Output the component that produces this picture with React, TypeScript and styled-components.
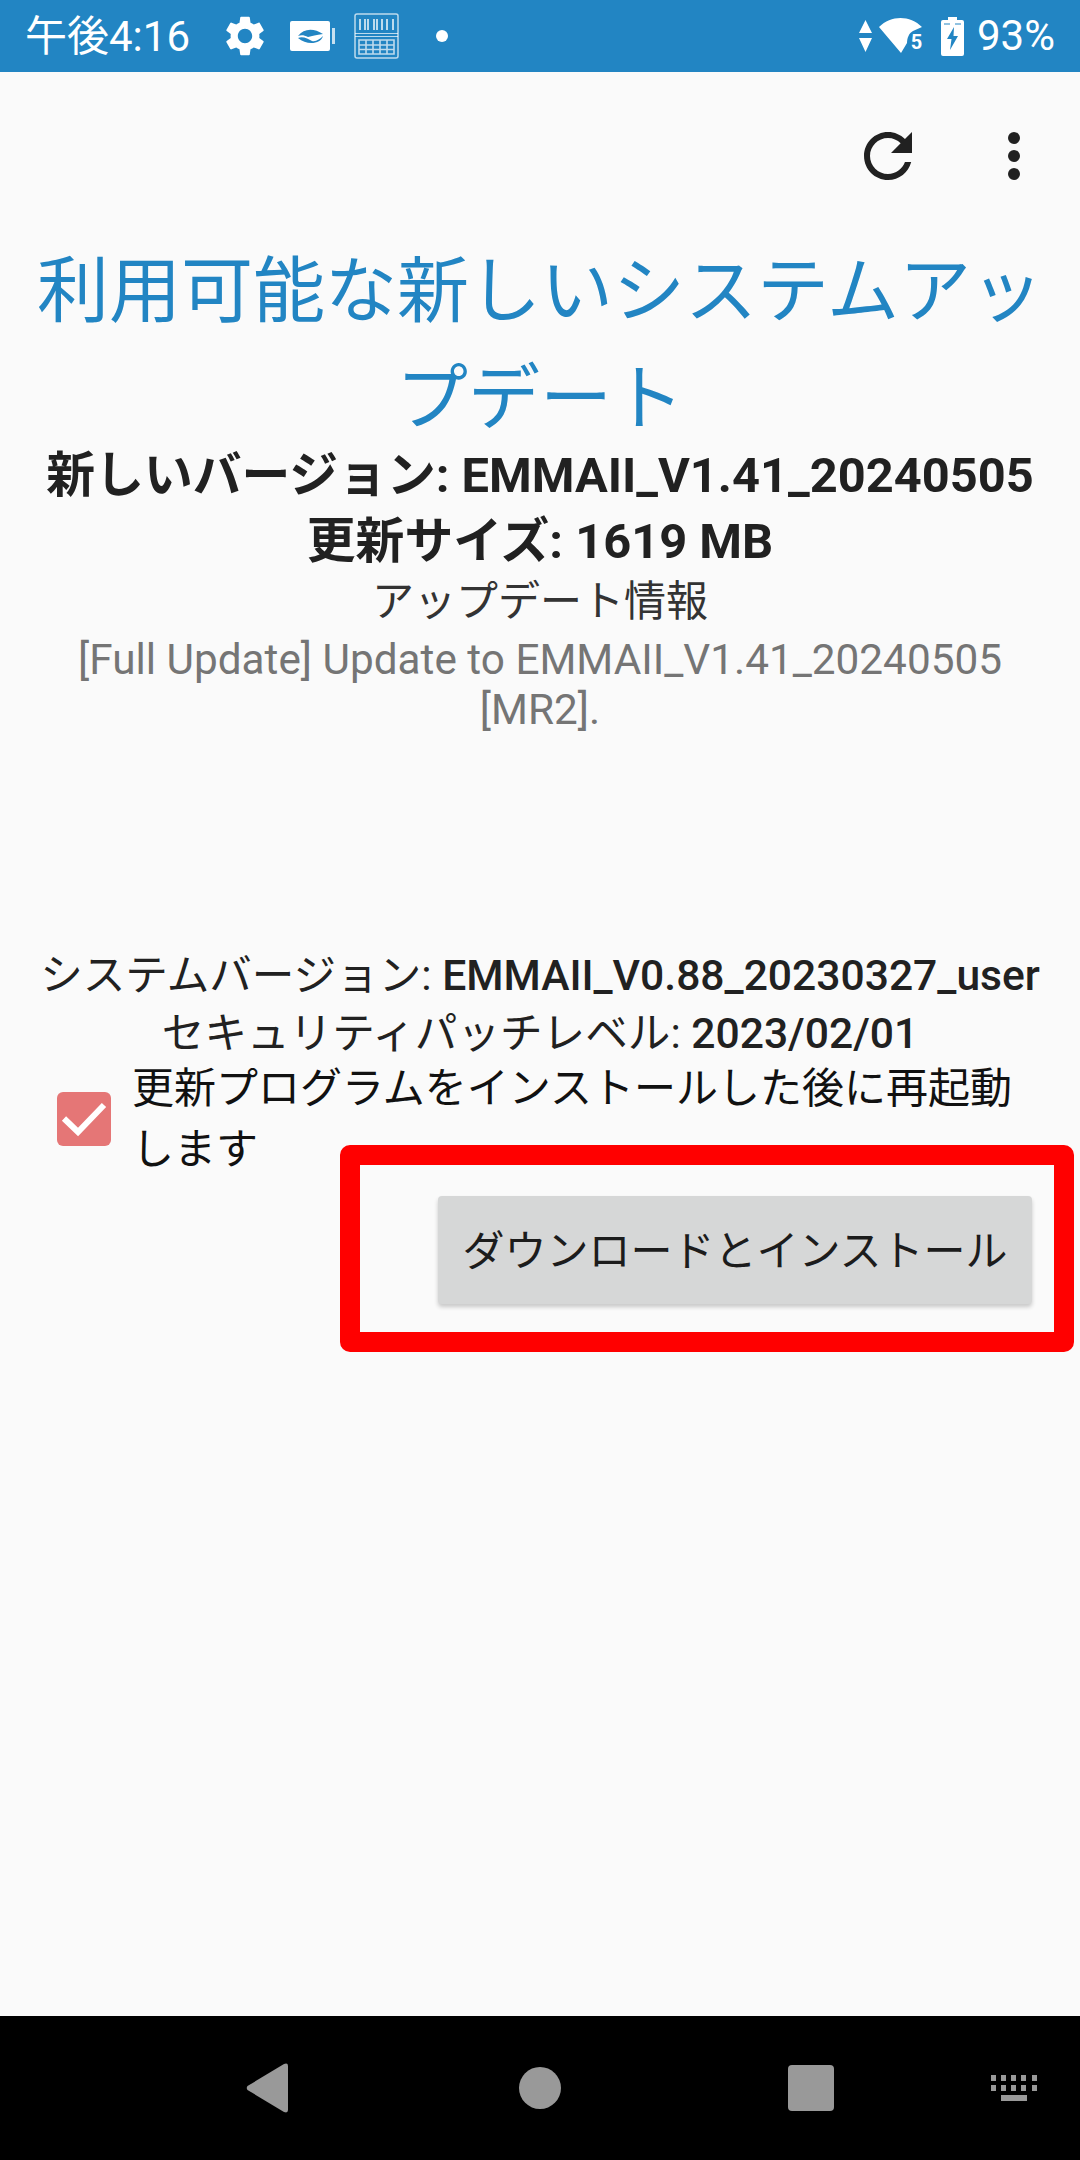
import React, { FC } from "react";
import styled, { createGlobalStyle } from "styled-components";

const FONT = `Roboto, "Noto Sans CJK JP", sans-serif`;
const BLUE = "#2285c3";

const GlobalStyle = createGlobalStyle`
  html, body {
    margin: 0;
    padding: 0;
    background: #fafafa;
  }
  body {
    font-family: ${FONT};
  }
`;

const App: FC = () => {
  return (
    <Screen>
      <GlobalStyle />
      <StatusBar>
        <Clock>午後4:16</Clock>
        <StatusGroup>
          <GearIcon />
          <LeafBatteryIcon />
          <BarcodeIcon />
          <Dot />
        </StatusGroup>
        <StatusRight>
          <ArrowsIcon />
          <WifiIcon />
          <BatteryIcon />
          <Percent>93%</Percent>
        </StatusRight>
      </StatusBar>

      <Content>
        <Toolbar>
          <svg width="72" height="72" viewBox="0 0 24 24" fill="#212121">
            <path d="M17.65 6.35C16.2 4.9 14.21 4 12 4c-4.42 0-7.99 3.58-7.99 8s3.57 8 7.99 8c3.73 0 6.84-2.55 7.73-6h-2.08c-.82 2.33-3.04 4-5.65 4-3.31 0-6-2.69-6-6s2.69-6 6-6c1.66 0 3.14.69 4.22 1.78L13 11h7V4l-2.35 2.35z" />
          </svg>
          <svg width="72" height="72" viewBox="0 0 24 24" fill="#212121">
            <circle cx="12" cy="6" r="2" />
            <circle cx="12" cy="12" r="2" />
            <circle cx="12" cy="18" r="2" />
          </svg>
        </Toolbar>

        <Title>利用可能な新しいシステムアップデート</Title>
        <VersionBlock>
          <VersionLine>新しいバージョン: EMMAII_V1.41_20240505</VersionLine>
          <VersionLine>更新サイズ: 1619 MB</VersionLine>
        </VersionBlock>
        <InfoHeading>アップデート情報</InfoHeading>
        <InfoBody>[Full Update] Update to EMMAII_V1.41_20240505 [MR2].</InfoBody>

        <SystemInfo>
          <SystemLine>
            システムバージョン: <b>EMMAII_V0.88_20230327_user</b>
          </SystemLine>
          <SystemLine>
            セキュリティパッチレベル: <b>2023/02/01</b>
          </SystemLine>
        </SystemInfo>

        <CheckRow>
          <CheckBox>
            <svg width="54" height="54" viewBox="0 0 54 54" fill="none">
              <path d="M7 26.5 L21 40 L47 13" stroke="#fff" strokeWidth="6" />
            </svg>
          </CheckBox>
          <CheckLabel>更新プログラムをインストールした後に再起動します</CheckLabel>
        </CheckRow>

        <ButtonRow>
          <RedFrame />
          <InstallButton>ダウンロードとインストール</InstallButton>
        </ButtonRow>
      </Content>

      <NavBar>
        <svg width="42" height="50" viewBox="0 0 42 50" fill="#999">
          <path d="M38 1 L1.5 23 Q0 25 1.5 27 L38 49 Q42 50.5 42 47 V3 Q42 -0.5 38 1 Z" />
        </svg>
        <NavCircle />
        <NavSquare />
        <NavKeyboard>
          <svg width="46" height="26" viewBox="0 0 46 26" fill="#999">
            <rect x="0" y="0" width="5" height="6" />
            <rect x="10" y="0" width="5" height="6" />
            <rect x="20" y="0" width="5" height="6" />
            <rect x="30" y="0" width="5" height="6" />
            <rect x="41" y="0" width="5" height="6" />
            <rect x="0" y="10" width="5" height="6" />
            <rect x="10" y="10" width="5" height="6" />
            <rect x="20" y="10" width="5" height="6" />
            <rect x="30" y="10" width="5" height="6" />
            <rect x="41" y="10" width="5" height="6" />
            <rect x="10" y="20" width="26" height="6" />
          </svg>
        </NavKeyboard>
      </NavBar>
    </Screen>
  );
};

const GearIcon: FC = () => (
  <svg width="48" height="48" viewBox="0 0 24 24" fill="#fff">
    <path d="M19.14 12.94c.04-.3.06-.61.06-.94 0-.32-.02-.64-.07-.94l2.03-1.58c.18-.14.23-.41.12-.61l-1.92-3.32c-.12-.22-.37-.29-.59-.22l-2.39.96c-.5-.38-1.03-.7-1.62-.94l-.36-2.54c-.04-.24-.24-.41-.48-.41h-3.84c-.24 0-.43.17-.47.41l-.36 2.54c-.59.24-1.13.57-1.62.94l-2.39-.96c-.22-.08-.47 0-.59.22L2.74 8.87c-.12.21-.08.47.12.61l2.03 1.58c-.05.3-.09.63-.09.94s.02.64.07.94l-2.03 1.58c-.18.14-.23.41-.12.61l1.92 3.32c.12.22.37.29.59.22l2.39-.96c.5.38 1.03.7 1.62.94l.36 2.54c.05.24.24.41.48.41h3.84c.24 0 .44-.17.47-.41l.36-2.54c.59-.24 1.13-.56 1.62-.94l2.39.96c.22.08.47 0 .59-.22l1.92-3.32c.12-.22.07-.47-.12-.61l-2.01-1.58zM12 15.6c-1.98 0-3.6-1.62-3.6-3.6s1.62-3.6 3.6-3.6 3.6 1.62 3.6 3.6-1.62 3.6-3.6 3.6z" />
  </svg>
);

const LeafBatteryIcon: FC = () => (
  <svg width="45" height="30" viewBox="0 0 45 30">
    <rect x="0" y="0" width="40" height="30" rx="2" fill="#fff" />
    <rect x="42" y="7" width="3" height="16" fill="#fff" fillOpacity="0.75" />
    <path d="M8 15 C14 7 24 7 33 13 C26 14 22 15 18 16 C14 14 11 14 8 15 Z" fill={BLUE} />
    <path d="M8 17 C13 15 18 18 22 20 C26 21 30 18 33 15 C31 23 17 25 8 17 Z" fill={BLUE} />
  </svg>
);

const BarcodeIcon: FC = () => (
  <svg width="45" height="46" viewBox="0 0 45 46" fill="none" stroke="#fff" strokeOpacity="0.7">
    <rect x="1" y="1" width="43" height="44" rx="2" strokeWidth="1.5" />
    <path d="M1 20.5 H44 M1 23.5 H44" strokeWidth="1.2" />
    <path
      d="M6 6 V17 M11 6 V17 M14 6 V17 M20 6 V17 M23 6 V17 M28 6 V17 M33 6 V17 M39 6 V17"
      strokeWidth="2"
    />
    <path
      d="M5 27 H40 V41 H5 Z M5 32 H40 M5 36.5 H40 M12 27 V41 M19 27 V41 M26 27 V41 M33 27 V41"
      strokeWidth="1.6"
    />
  </svg>
);

const ArrowsIcon: FC = () => (
  <svg width="13" height="32" viewBox="0 0 13 32" fill="#fff">
    <path d="M6.5 0 L13 13 H0 Z M0 18 H13 L6.5 32 Z" />
  </svg>
);

const WifiIcon: FC = () => (
  <svg width="44" height="36" viewBox="0 0 44 36" fill="#fff">
    <path d="M0 9 C12 -3 31 -3 43 9 L34 13 C30 15 28 20 28 25 L22 35 Z" />
    <text x="37.5" y="31" fontSize="20" fontWeight="700" fontFamily="Roboto, sans-serif" textAnchor="middle">
      5
    </text>
  </svg>
);

const BatteryIcon: FC = () => (
  <svg width="23" height="39" viewBox="0 0 23 39" fill="#fff">
    <path d="M7 0 H16 V3 H21 Q23 3 23 5 V37 Q23 39 21 39 H2 Q0 39 0 37 V5 Q0 3 2 3 H7 Z" />
    <path d="M13 10 L6 22 H10.5 L9 33 L17 19 H12.5 Z" fill={BLUE} />
    <path d="M3 7 H9 M14 7 H20" stroke={BLUE} strokeWidth="1" />
  </svg>
);

export default App;

const Screen = styled.div`
  width: 1080px;
  height: 2160px;
  display: flex;
  flex-direction: column;
  background: #fafafa;
  overflow: hidden;
`;

const StatusBar = styled.div`
  height: 72px;
  flex: none;
  display: flex;
  align-items: center;
  padding: 0 25px 0 25px;
  background: ${BLUE};
  color: #fff;
  box-sizing: border-box;
`;

const Clock = styled.span`
  padding-top: 2px;
  font-size: 42px;
  line-height: 72px;
  white-space: nowrap;
`;

const StatusGroup = styled.div`
  display: flex;
  align-items: center;
  margin-left: 31px;
  gap: 21px;

  > svg:nth-child(3) {
    margin-left: -2px;
  }
`;

const Dot = styled.span`
  width: 12px;
  height: 12px;
  margin-left: 16px;
  border-radius: 50%;
  background: #fff;
`;

const StatusRight = styled.div`
  margin-left: auto;
  display: flex;
  align-items: center;

  > svg:nth-child(1) {
    margin-right: 7px;
  }

  > svg:nth-child(2) {
    margin-right: 18px;
  }
`;

const Percent = styled.span`
  margin-left: 13px;
  font-size: 42px;
  line-height: 72px;
`;

const Content = styled.div`
  flex: 1;
  display: flex;
  flex-direction: column;
  text-align: center;
  padding: 0 30px;
`;

const Toolbar = styled.div`
  height: 166px;
  padding-top: 48px;
  box-sizing: border-box;
  display: flex;
  justify-content: flex-end;
  gap: 54px;
`;

const Title = styled.h1`
  margin: 0;
  font-size: 72px;
  font-weight: 400;
  line-height: 107px;
  color: ${BLUE};
`;

const VersionBlock = styled.div`
  display: flex;
  flex-direction: column;
  gap: 18px;
`;

const VersionLine = styled.div`
  font-size: 48.8px;
  font-weight: 700;
  line-height: 48px;
  color: #212121;
  white-space: nowrap;
`;

const InfoHeading = styled.div`
  margin-top: 6px;
  font-size: 42px;
  line-height: 60px;
  color: #333;
`;

const InfoBody = styled.div`
  margin-top: 3px;
  font-size: 42.3px;
  line-height: 50px;
  color: #757575;
`;

const SystemInfo = styled.div`
  margin: 215px -10px 0;
  display: flex;
  flex-direction: column;
  gap: 8px;
`;

const SystemLine = styled.div`
  font-size: 42.6px;
  line-height: 50px;
  color: #212121;
  white-space: nowrap;

  b {
    font-weight: 500;
  }
`;

const CheckRow = styled.div`
  display: flex;
  align-items: center;
  margin: 0 0 0 27px;
  text-align: left;
`;

const CheckBox = styled.div`
  width: 54px;
  height: 54px;
  flex: none;
  border-radius: 6px;
  background: #e57676;
`;

const CheckLabel = styled.div`
  margin-left: 21px;
  font-size: 42px;
  line-height: 61px;
  color: #111;
`;

const ButtonRow = styled.div`
  position: relative;
  display: flex;
  justify-content: flex-end;
  margin-top: 16px;
`;

const RedFrame = styled.div`
  position: absolute;
  left: 310px;
  top: -51px;
  width: 734px;
  height: 207px;
  box-sizing: border-box;
  border: 20px solid #ff0000;
  border-radius: 10px;
`;

const InstallButton = styled.button`
  width: 594px;
  height: 108px;
  margin-right: 18px;
  padding: 0 0 5px;
  border: 0;
  border-radius: 4px;
  background: #d6d7d7;
  box-shadow: 0 3px 4px rgba(0, 0, 0, 0.2);
  font-family: ${FONT};
  font-size: 42px;
  color: #1c1c1c;
`;

const NavBar = styled.div`
  height: 144px;
  flex: none;
  display: grid;
  grid-template-columns: 246px 42px 231px 42px 227px 46px 157px 46px;
  align-items: center;
  background: #000;

  > :nth-child(1) {
    grid-column: 2;
  }
`;

const NavCircle = styled.div`
  grid-column: 4;
  width: 42px;
  height: 42px;
  border-radius: 50%;
  background: #999;
`;

const NavSquare = styled.div`
  grid-column: 6;
  width: 46px;
  height: 46px;
  border-radius: 4px;
  background: #999;
`;

const NavKeyboard = styled.div`
  grid-column: 8;
  display: flex;
`;
